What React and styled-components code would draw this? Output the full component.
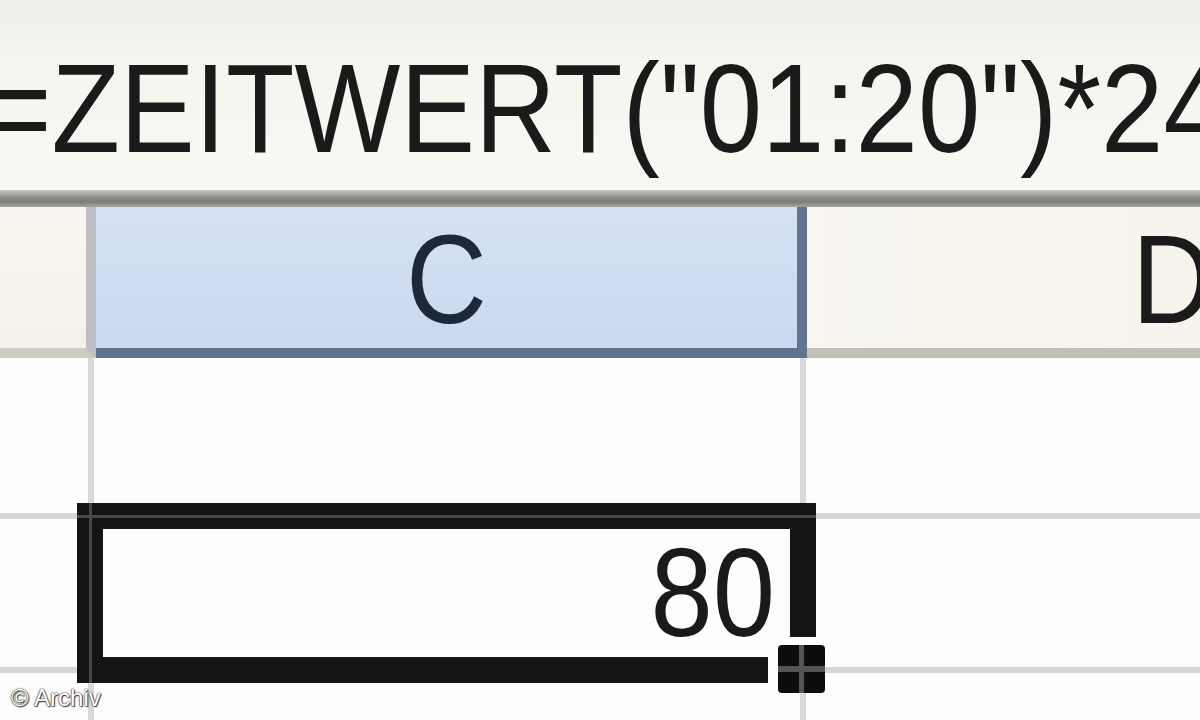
import React from 'react'
import styled, { createGlobalStyle } from 'styled-components'

const GlobalStyle = createGlobalStyle`
  html, body {
    margin: 0;
    padding: 0;
    background: #ffffff;
  }
  body {
    font-family: "Liberation Sans", Arial, sans-serif;
  }
`

const Page = styled.div`
  position: relative;
  width: 1200px;
  height: 720px;
  overflow: hidden;
  background: #fdfdfd;
`

const FormulaBar = styled.div`
  height: 190px;
  box-sizing: border-box;
  padding-top: 46px;
  background: linear-gradient(#efede7 0%, #f6f4ef 30%, #f9f8f4 100%);
  white-space: nowrap;
  overflow: hidden;
`

const BigText = styled.span`
  display: inline-block;
  font-family: "Liberation Sans", Arial, sans-serif;
  font-size: 126px;
  line-height: 126px;
  color: ${p => p.$color || '#1a1a1a'};
  transform: scaleX(0.89);
  transform-origin: ${p => p.$origin || 'left'} center;
`

const Formula = styled(BigText)`
  margin-left: -14px;
`

const Divider = styled.div`
  height: 17px;
  background: linear-gradient(#c9c7c1 0%, #8d8c89 45%, #7d7d7d 70%, #a6a6a4 100%);
`

const HeaderRow = styled.div`
  display: flex;
  height: 151px;
`

const HeaderCell = styled.div`
  flex: none;
  width: ${p => p.$w}px;
  height: 141px;
  box-sizing: content-box;
  border-right: ${p => (p.$line ? `10px solid ${p.$line}` : 'none')};
  border-bottom: 10px solid ${p => p.$under};
  background: ${p => p.$bg};
  display: flex;
  justify-content: center;
  overflow: hidden;
`

const HeaderLabel = styled(BigText)`
  line-height: 145px;
  transform-origin: center center;
`

const Row = styled.div`
  display: flex;
`

const Cell = styled.div`
  position: relative;
  z-index: ${p => (p.$active ? 2 : 'auto')};
  flex: none;
  width: ${p => p.$w}px;
  height: ${p => p.$h}px;
  border-right: ${p => (p.$last ? 'none' : '6px solid #d9d9d9')};
  border-bottom: 6px solid #d6d6d6;
  background: #fdfdfd;
  display: flex;
  justify-content: flex-end;
  padding-right: ${p => p.$pr || 0}px;
  box-sizing: content-box;
`

const CellValue = styled(BigText)`
  line-height: 148px;
`

const Selection = styled.div`
  position: absolute;
  top: -16px;
  left: -17px;
  right: -16px;
  bottom: -16px;
  border: 26px solid #141414;
  pointer-events: none;

  &::before {
    content: '';
    position: absolute;
    left: -26px;
    right: -26px;
    top: -14px;
    height: 3px;
    background: #484848;
  }
  &::after {
    content: '';
    position: absolute;
    top: -26px;
    bottom: -26px;
    left: -14px;
    width: 3px;
    background: #484848;
  }
`

const CornerCut = styled.div`
  position: absolute;
  right: -26px;
  bottom: -26px;
  width: 48px;
  height: 46px;
  background: #fdfdfd;
`

const FillHandle = styled.div`
  position: absolute;
  right: -35px;
  bottom: -36px;
  width: 47px;
  height: 48px;
  background:
    linear-gradient(90deg, transparent 44%, #555 44%, #555 56%, transparent 56%),
    linear-gradient(transparent 44%, #555 44%, #555 56%, transparent 56%),
    #0c0c0c;
  border-radius: 4px;
`

const Watermark = styled.div`
  position: absolute;
  left: 11px;
  bottom: 8px;
  font-family: "Liberation Sans", Arial, sans-serif;
  font-size: 24px;
  color: #ffffff;
  text-shadow: 0 0 2px #333, 0 0 1px #222, 1px 1px 1px #444;
  z-index: 3;
`

export default function App() {
  return (
    <Page>
      <GlobalStyle />
      <FormulaBar>
        <Formula>=ZEITWERT("01:20")*24</Formula>
      </FormulaBar>
      <Divider />
      <HeaderRow>
        <HeaderCell $w={86} $bg="linear-gradient(#f8f6f0, #f4f1e9)" $line="#bcc0c6" $under="#cdcac1" />
        <HeaderCell $w={701} $bg="linear-gradient(#d6e1f3, #cad9f0)" $line="#62758f" $under="#5e728c">
          <HeaderLabel $color="#1d293a">C</HeaderLabel>
        </HeaderCell>
        <HeaderCell $w={730} $bg="linear-gradient(90deg, #f8f6f0, #f4f1e8)" $under="#c2bfb7">
          <HeaderLabel>D</HeaderLabel>
        </HeaderCell>
      </HeaderRow>
      <Row>
        <Cell $w={88} $h={155} />
        <Cell $w={706} $h={155} />
        <Cell $w={500} $h={155} $last />
      </Row>
      <Row>
        <Cell $w={88} $h={148} />
        <Cell $w={681} $h={148} $pr={25} $active>
          <CellValue $origin="right">80</CellValue>
          <Selection>
            <CornerCut />
            <FillHandle />
          </Selection>
        </Cell>
        <Cell $w={500} $h={148} $last />
      </Row>
      <Row>
        <Cell $w={88} $h={60} />
        <Cell $w={706} $h={60} />
        <Cell $w={500} $h={60} $last />
      </Row>
      <Watermark>© Archiv</Watermark>
    </Page>
  )
}
